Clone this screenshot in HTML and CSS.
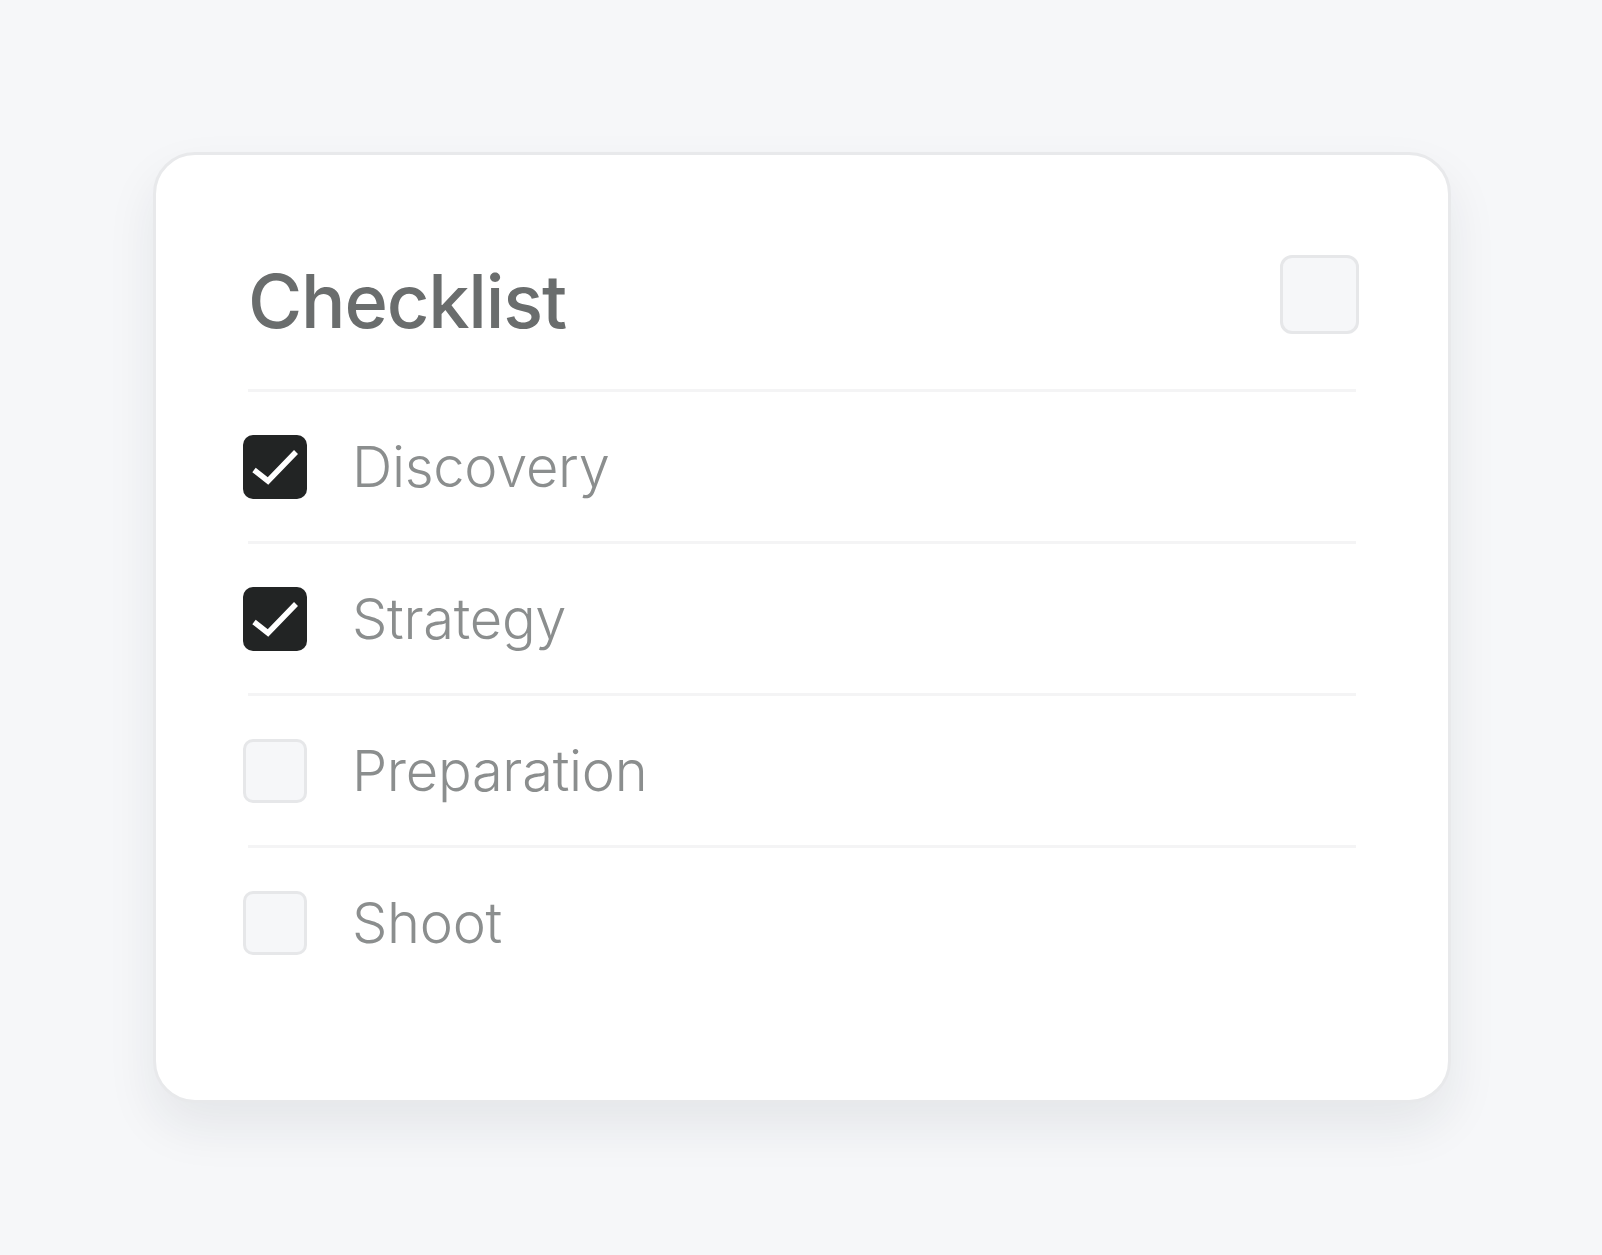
FILE: index.html
```html
<!DOCTYPE html>
<html lang="en">
<head>
<meta charset="utf-8">
<title>Checklist</title>
<link rel="stylesheet" href="styles.css">
</head>
<body>
<main class="page">
  <section class="card">
    <header class="card-head">
      <h1 class="title">Checklist</h1>
      <span class="head-box"></span>
    </header>
    <ul class="list">
      <li class="item">
        <span class="box checked">
          <svg viewBox="0 0 64 64" width="64" height="64"><polyline points="11,35 25,46 53,17" fill="none" stroke="#ffffff" stroke-width="5.5" stroke-linejoin="miter"/></svg>
        </span>
        <span class="label">Discovery</span>
      </li>
      <li class="item">
        <span class="box checked">
          <svg viewBox="0 0 64 64" width="64" height="64"><polyline points="11,35 25,46 53,17" fill="none" stroke="#ffffff" stroke-width="5.5" stroke-linejoin="miter"/></svg>
        </span>
        <span class="label">Strategy</span>
      </li>
      <li class="item">
        <span class="box"></span>
        <span class="label">Preparation</span>
      </li>
      <li class="item">
        <span class="box"></span>
        <span class="label">Shoot</span>
      </li>
    </ul>
  </section>
</main>
</body>
</html>
```

FILE: styles.css
```css
* { box-sizing: border-box; }

html, body {
  margin: 0;
  padding: 0;
  background: #f6f7f9;
  font-family: Inter, "Liberation Sans", sans-serif;
}

.page {
  width: 1602px;
  height: 1255px;
  padding: 152px 0 0 153px;
}

.card {
  width: 1298px;
  height: 951px;
  background: #ffffff;
  border: 3px solid #e8e9eb;
  border-radius: 42px;
  box-shadow: 0 24px 50px rgba(30, 35, 45, 0.08);
  padding: 100px 89px 0 87px;
}

.card-head {
  display: flex;
  justify-content: space-between;
  align-items: flex-start;
  height: 79px;
  margin-bottom: 55px;
}

.title {
  margin: 9px 0 0 5px;
  font-size: 74px;
  line-height: 1;
  font-weight: 460;
  color: #6a6d6d;
  letter-spacing: -1.2px;
}

.head-box {
  width: 79px;
  height: 79px;
  border: 3px solid #e6e7e9;
  border-radius: 12px;
  background: #f6f7f9;
}

.list {
  list-style: none;
  margin: 0;
  padding: 0;
}

.item {
  display: flex;
  align-items: center;
  gap: 45px;
  height: 152px;
  padding-top: 0;
  border-top: 3px solid #f4f4f5;
  margin: 0 3px 0 5px;
}

.item .box {
  margin-left: -5px;
}

.box {
  flex: none;
  width: 64px;
  height: 64px;
  border-radius: 10px;
  border: 3px solid #e6e7e9;
  background: #f6f7f9;
  display: flex;
}

.box.checked {
  background: #222424;
  border: none;
}

.box svg { display: block; }

.label {
  font-size: 56px;
  line-height: 1;
  font-weight: 300;
  color: #8b8e8e;
  letter-spacing: -0.3px;
}
```
